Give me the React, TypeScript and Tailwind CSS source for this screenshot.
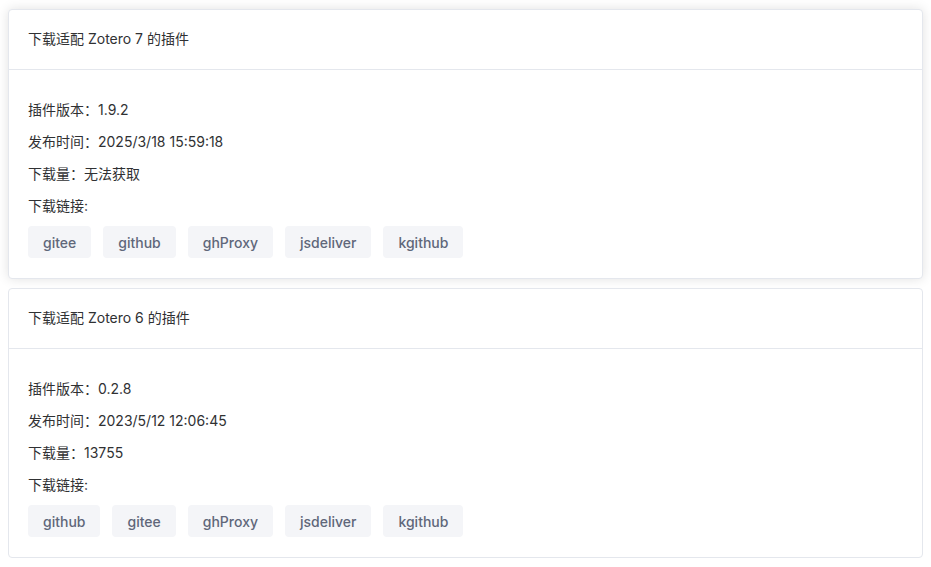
interface Plugin {
  title: string
  version: string
  date: string
  downloads: string
  links: string[]
  shadow?: boolean
}

const PLUGINS: Plugin[] = [
  {
    title: '下载适配 Zotero 7 的插件',
    version: '1.9.2',
    date: '2025/3/18 15:59:18',
    downloads: '无法获取',
    links: ['gitee', 'github', 'ghProxy', 'jsdeliver', 'kgithub'],
    shadow: true,
  },
  {
    title: '下载适配 Zotero 6 的插件',
    version: '0.2.8',
    date: '2023/5/12 12:06:45',
    downloads: '13755',
    links: ['github', 'gitee', 'ghProxy', 'jsdeliver', 'kgithub'],
  },
]

function PluginCard({ plugin }: { plugin: Plugin }) {
  return (
    <div
      className={
        'rounded-[4px] border border-[#e4e7ed] bg-white text-[#303133] ' +
        (plugin.shadow ? 'shadow-[0_0_12px_rgba(0,0,0,0.12)]' : '')
      }
    >
      {/* header */}
      <div className="border-b border-[#e4e7ed] px-[19px] pt-[19px] pb-[20px] text-[14px] leading-[20px]">
        {plugin.title}
      </div>
      {/* body */}
      <div className="px-[19px] pt-[24px] pb-[20px] text-[14px]">
        <p className="h-8 leading-8">插件版本：{plugin.version}</p>
        <p className="h-8 leading-8">发布时间：{plugin.date}</p>
        <p className="h-8 leading-8">下载量：{plugin.downloads}</p>
        <p className="h-8 leading-8">下载链接:</p>
        <div className="mt-[4px] flex gap-3">
          {plugin.links.map((l) => (
            <button
              key={l}
              className="h-8 rounded-[4px] bg-[#f4f5f8] px-[15px] text-[14px] font-medium text-[#60677a]"
            >
              {l}
            </button>
          ))}
        </div>
      </div>
    </div>
  )
}

export default function App() {
  return (
    <div className="flex min-h-[567px] flex-col gap-[9px] bg-white pt-[9px] pl-[8px] pr-[8px] font-[Inter,'Noto_Sans_CJK_SC',sans-serif]">
      {PLUGINS.map((p) => (
        <PluginCard key={p.title} plugin={p} />
      ))}
    </div>
  )
}
